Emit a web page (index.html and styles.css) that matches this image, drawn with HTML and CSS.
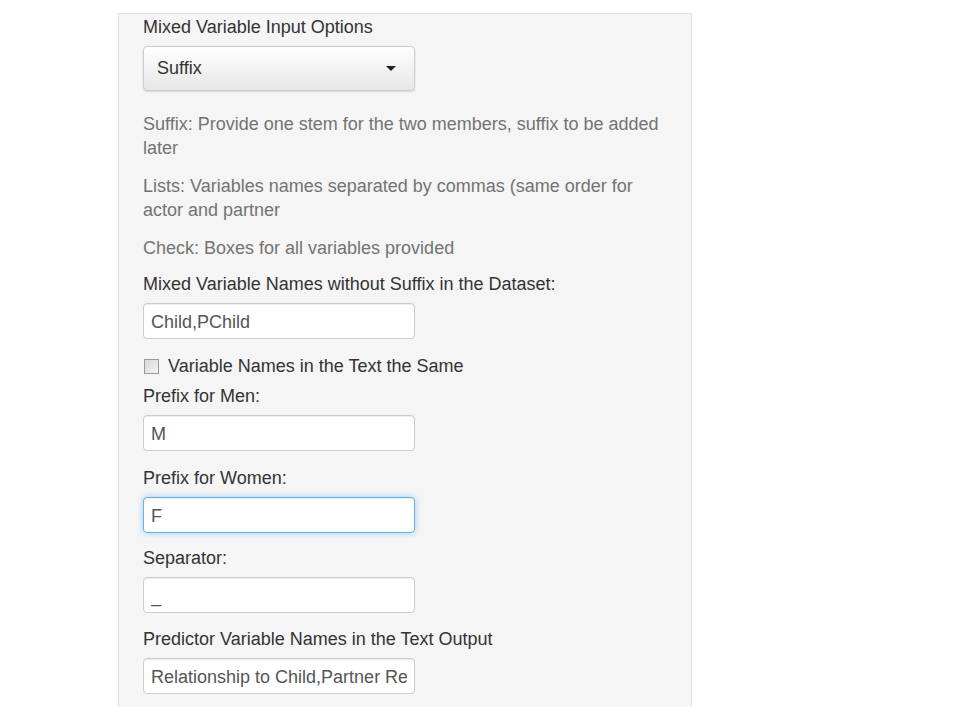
FILE: index.html
```html
<!DOCTYPE html>
<html lang="en">
<head>
  <meta charset="UTF-8" />
  <meta name="viewport" content="width=device-width, initial-scale=1.0" />
  <title>Mixed Variable Input</title>
  <link rel="stylesheet" href="styles.css">
</head>
<body>
  <div class="well">
    <div class="form-group">
      <label>Mixed Variable Input Options</label>
      <div class="select-btn">
        <span>Suffix</span>
        <span class="caret"></span>
      </div>
    </div>

    <p class="help">Suffix: Provide one stem for the two members, suffix to be added later</p>
    <p class="help">Lists: Variables names separated by commas (same order for actor and partner</p>
    <p class="help">Check: Boxes for all variables provided</p>

    <div class="form-group">
      <label for="mixedNames">Mixed Variable Names without Suffix in the Dataset:</label>
      <input type="text" id="mixedNames" value="Child,PChild" />
    </div>

    <div class="checkbox">
      <input type="checkbox" id="sameNames" />
      <label for="sameNames">Variable Names in the Text the Same</label>
    </div>

    <div class="form-group">
      <label for="prefixMen">Prefix for Men:</label>
      <input type="text" id="prefixMen" value="M" />
    </div>

    <div class="form-group tighter">
      <label for="prefixWomen">Prefix for Women:</label>
      <input type="text" id="prefixWomen" class="focused" value="F" />
    </div>

    <div class="form-group tight">
      <label for="separator">Separator:</label>
      <input type="text" id="separator" value="_" />
    </div>

    <div class="form-group last">
      <label for="predictorNames">Predictor Variable Names in the Text Output</label>
      <input type="text" id="predictorNames" value="Relationship to Child,Partner Relationship" />
    </div>
  </div>
</body>
</html>
```

FILE: styles.css
```css
* {
  box-sizing: border-box;
}
body {
  margin: 0;
  padding: 0;
  background: #fff;
  font-family: 'Liberation Sans', Arial, sans-serif;
  font-size: 18px;
  color: #333;
}
.well {
  margin: 13px 0 0 118px;
  width: 574px;
  height: 694px;
  padding: 3px 24px 0 24px;
  background: #f5f5f5;
  border: 1px solid #e3e3e3;
  border-bottom: none;
}
.form-group {
  margin-bottom: 17px;
}
.form-group.tight {
  margin-bottom: 16px;
}
.form-group.tighter {
  margin-bottom: 15px;
}
.form-group.last {
  margin-bottom: 0;
}
label {
  display: block;
  line-height: 20px;
  height: 20px;
  margin-bottom: 9px;
  color: #333;
}
input[type="text"] {
  display: block;
  width: 272px;
  height: 36px;
  padding: 2px 7px 0 7px;
  border: 1px solid #ccc;
  border-radius: 4px;
  background: #fff;
  font-family: inherit;
  font-size: 18px;
  color: #555;
  box-shadow: inset 0 1px 1px rgba(0, 0, 0, 0.075);
  outline: none;
}
input.focused {
  border-color: #66afe9;
  box-shadow: inset 0 1px 1px rgba(0, 0, 0, 0.075), 0 0 6px rgba(102, 175, 233, 0.6);
}
.select-btn {
  display: flex;
  align-items: center;
  justify-content: space-between;
  width: 272px;
  height: 45px;
  padding: 0 18px 0 13px;
  border: 1px solid #ccc;
  border-radius: 4px;
  background: linear-gradient(to bottom, #fff 0%, #e6e6e6 100%);
  box-shadow: 0 1px 2px rgba(0, 0, 0, 0.12);
  color: #333;
}
.caret {
  width: 0;
  height: 0;
  border-top: 5px solid #222;
  border-left: 5px solid transparent;
  border-right: 5px solid transparent;
}
.help {
  margin: 0 0 14px 0;
  line-height: 24px;
  color: #737373;
}
.help:first-of-type {
  margin-top: 21px;
}
.checkbox {
  display: flex;
  align-items: center;
  height: 20px;
  margin-bottom: 10px;
}
.checkbox input {
  appearance: none;
  width: 15px;
  height: 15px;
  margin: 1px 9px 0 1px;
  border: 1px solid #9a9a9a;
  background: linear-gradient(135deg, #d8d8d8 0%, #f4f4f4 100%);
}
.checkbox label {
  display: inline;
  margin: 0;
}
```
